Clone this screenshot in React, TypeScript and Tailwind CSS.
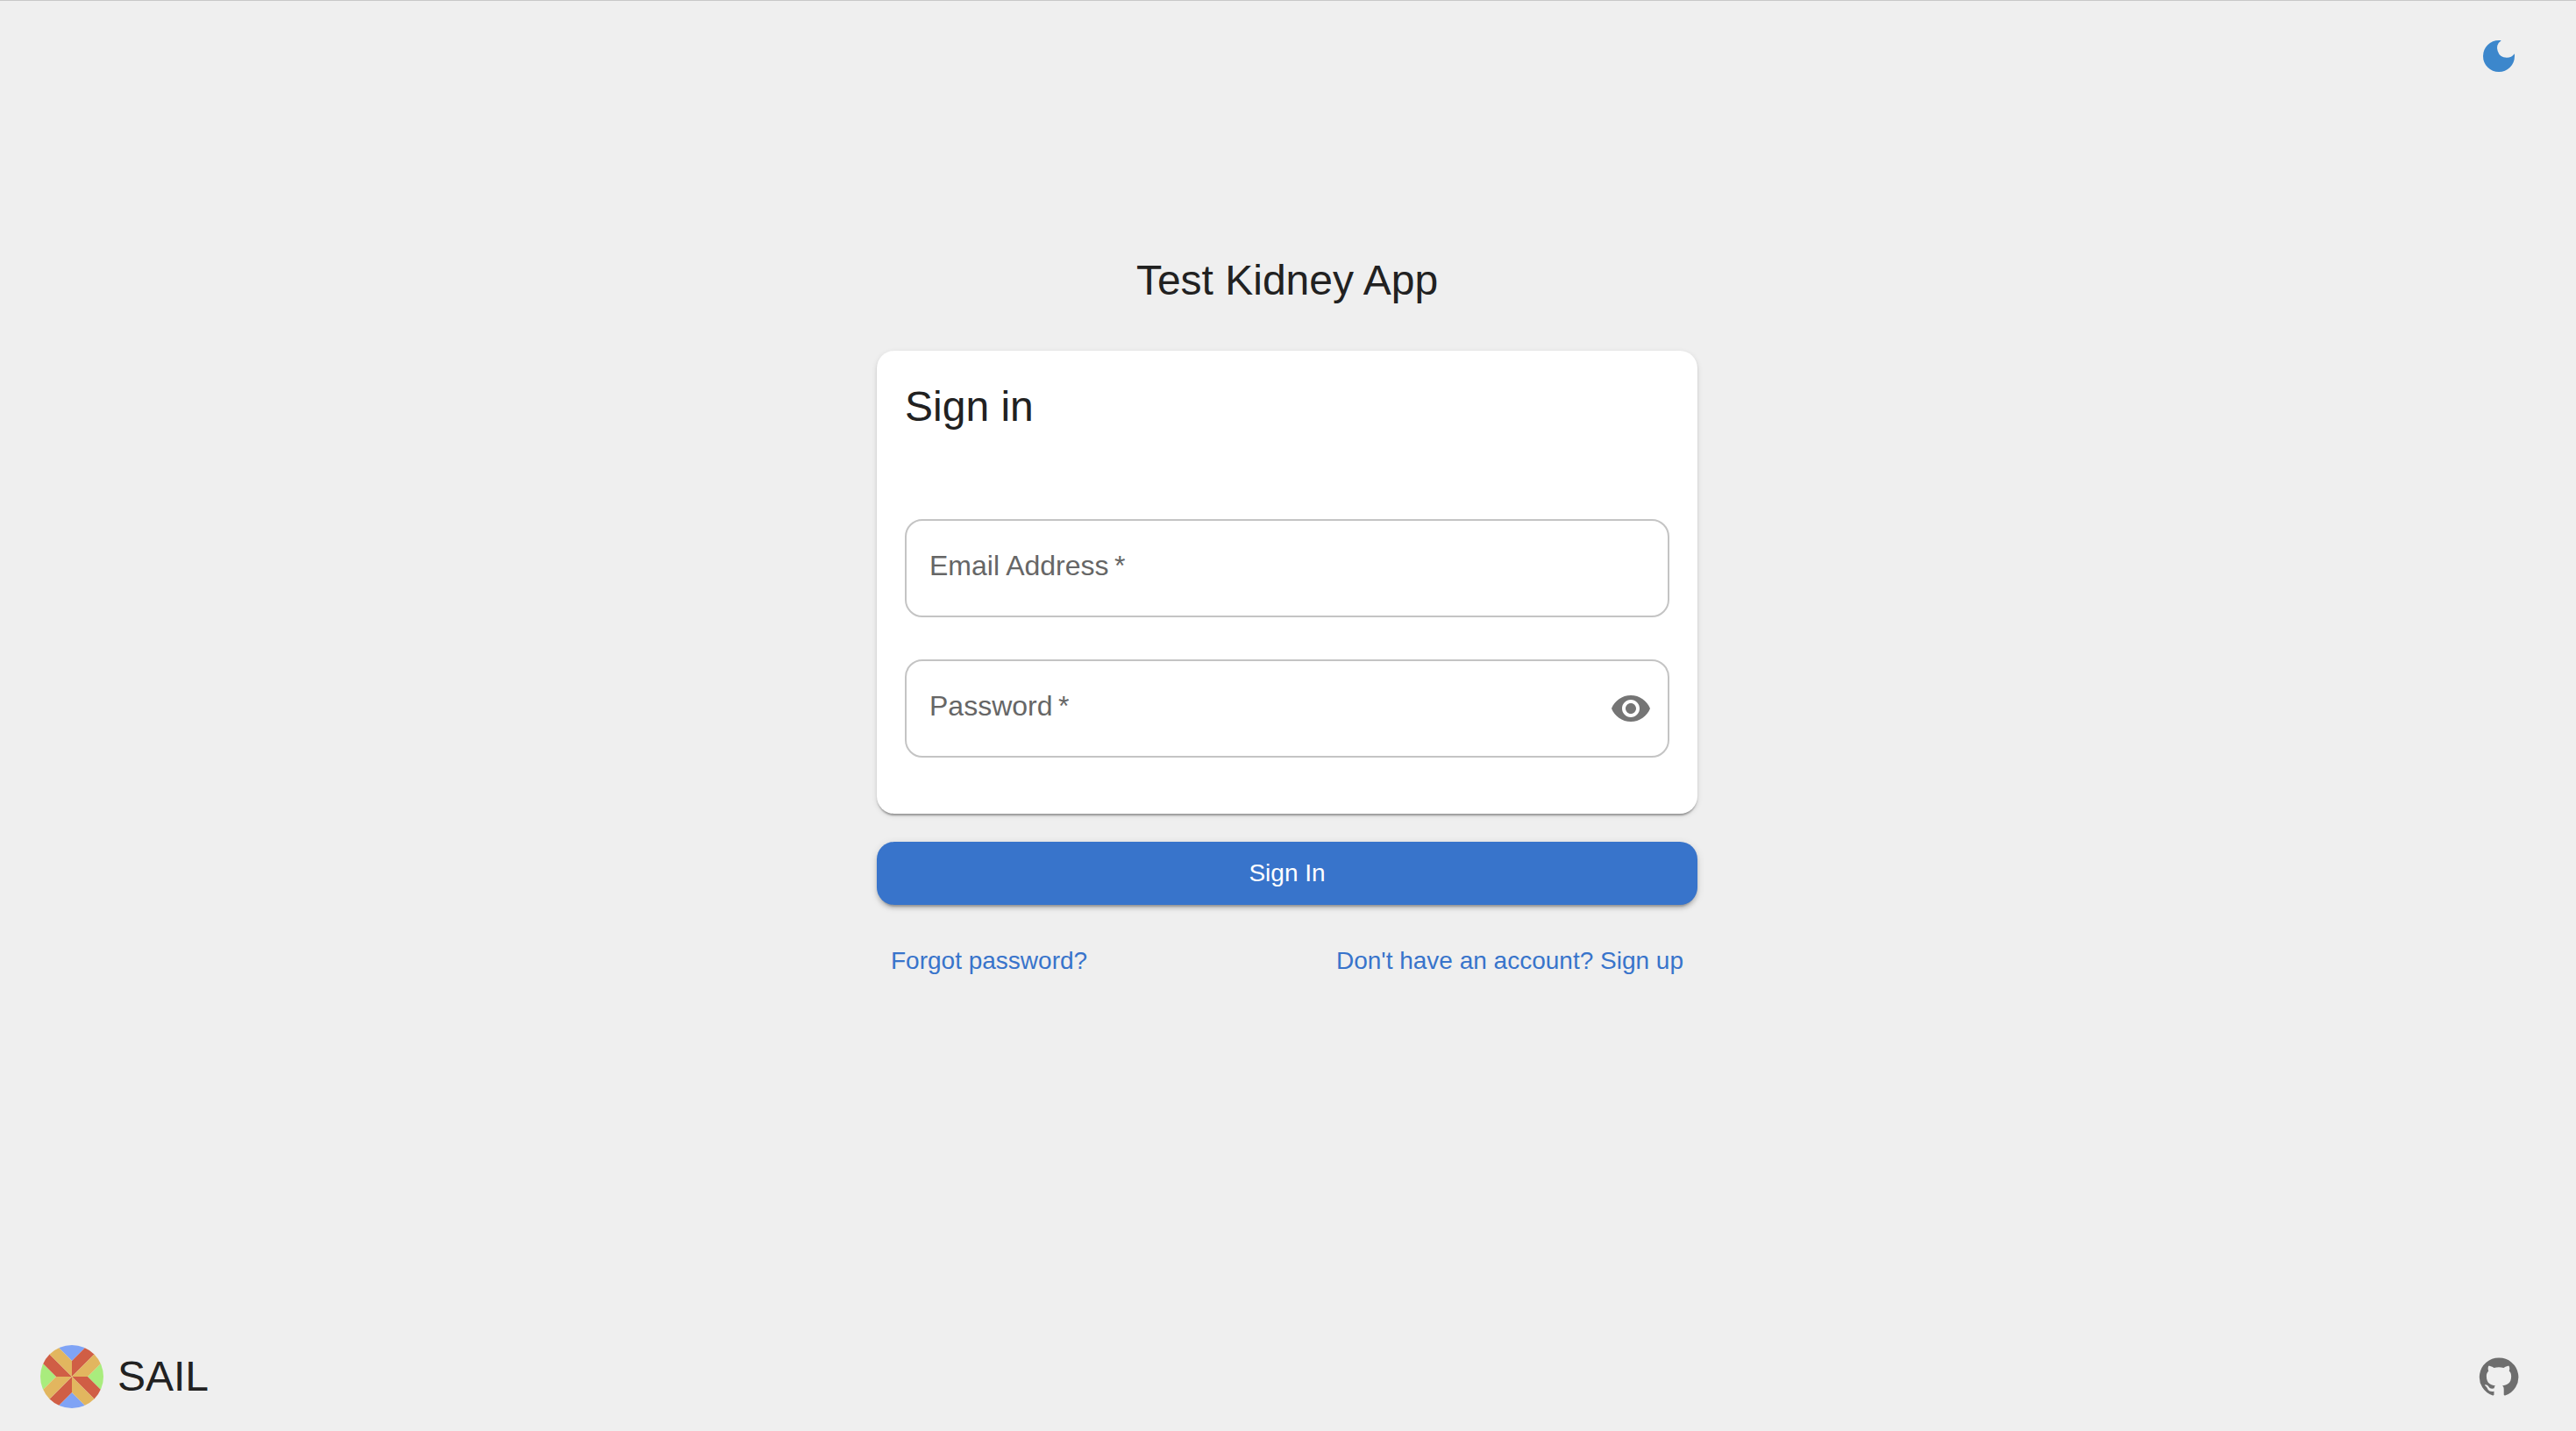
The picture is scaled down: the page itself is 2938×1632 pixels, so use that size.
import { useState } from "react";
import type { ReactNode } from "react";
import { MdDarkMode, MdVisibility, MdVisibilityOff } from "react-icons/md";

const cardShadow =
  "shadow-[0_4px_2px_-2px_rgba(0,0,0,0.2),0_2px_2px_0_rgba(0,0,0,0.14),0_2px_6px_0_rgba(0,0,0,0.12)]";
const buttonShadow =
  "shadow-[0_6px_2px_-4px_rgba(0,0,0,0.2),0_4px_4px_0_rgba(0,0,0,0.14),0_2px_10px_0_rgba(0,0,0,0.12)]";

function SailLogo() {
  return (
    <svg viewBox="-36 -36 72 72" className="size-18 rounded-full" aria-hidden="true">
      <path d="M0-18L-40-58H40Z" fill="#7fa3f5" />
      <path d="M0 18L-40 58H40Z" fill="#7fa3f5" />
      <path d="M-18 0L-58-40V40Z" fill="#a9ec7d" />
      <path d="M18 0L58-40V40Z" fill="#a9ec7d" />
      <path d="M0 0V-18L40-58V-40Z" fill="#d05e45" />
      <path d="M0 0H18L58-40H40Z" fill="#e2b65f" />
      <path d="M0 0H18L58 40H40Z" fill="#d05e45" />
      <path d="M0 0V18L40 58V40Z" fill="#e2b65f" />
      <path d="M0 0V18L-40 58V40Z" fill="#d05e45" />
      <path d="M0 0H-18L-58 40H-40Z" fill="#e2b65f" />
      <path d="M0 0H-18L-58-40H-40Z" fill="#d05e45" />
      <path d="M0 0V-18L-40-58V-40Z" fill="#e2b65f" />
    </svg>
  );
}

function GitHubIcon() {
  return (
    <svg viewBox="0 0 24 24" className="size-12" fill="currentColor" aria-hidden="true">
      <path d="M12 1.27a11 11 0 00-3.48 21.46c.55.09.73-.28.73-.55v-1.84c-3.03.64-3.67-1.46-3.67-1.46-.55-1.29-1.28-1.65-1.28-1.65-.92-.65.1-.65.1-.65 1.1 0 1.73 1.1 1.73 1.1.92 1.65 2.57 1.2 3.21.92a2 2 0 01.64-1.47c-2.47-.27-5.04-1.19-5.04-5.5 0-1.1.46-2.1 1.2-2.84a3.76 3.76 0 010-2.93s.91-.28 3.11 1.1c1.8-.49 3.7-.49 5.5 0 2.1-1.38 3.02-1.1 3.02-1.1a3.76 3.76 0 01.1 2.93c.83.74 1.2 1.74 1.2 2.94 0 4.21-2.57 5.13-5.04 5.4.45.37.82.92.82 2.02v3.03c0 .27.1.64.73.55A11 11 0 0012 1.27" />
    </svg>
  );
}

type FieldProps = {
  id: string;
  label: string;
  type: string;
  autoComplete: string;
  children?: ReactNode;
};

function Field({ id, label, type, autoComplete, children }: FieldProps) {
  return (
    <div className="relative flex h-28 items-center rounded-[20px] border-2 border-[#c4c4c4] focus-within:border-[#3874cb]">
      <input
        id={id}
        type={type}
        required
        placeholder=" "
        autoComplete={autoComplete}
        className="peer h-full min-w-0 flex-1 bg-transparent px-[26px] text-[32px] outline-none"
      />
      <label
        htmlFor={id}
        className="pointer-events-none absolute inset-y-0 left-[26px] flex items-center pb-1.5 text-[32px] leading-[46px] text-[#666666] peer-[:not(:placeholder-shown)]:hidden"
      >
        {label}&thinsp;*
      </label>
      {children}
    </div>
  );
}

export default function App() {
  const [visible, setVisible] = useState(false);

  return (
    <div className="flex min-h-screen flex-col border-t border-[#c8c8c8] bg-[#efefef] font-['Liberation_Sans',Arial,sans-serif] text-[#212121]">
      <header className="flex justify-end px-12 pt-[23px]">
        <button
          type="button"
          aria-label="Switch to dark mode"
          className="rounded-full p-4 text-[#3c87cc]"
        >
          <MdDarkMode className="size-12" />
        </button>
      </header>

      <main className="mx-auto flex w-full max-w-[938px] flex-1 flex-col pt-46 pr-0.5">
        <h1 className="text-center text-5xl leading-16">Test Kidney App</h1>

        <form className="mt-12 flex flex-col" onSubmit={(e) => e.preventDefault()}>
          <section className={`rounded-[20px] bg-white px-8 pt-8 pb-16 ${cardShadow}`}>
            <h2 className="text-5xl leading-16">Sign in</h2>
            <div className="mt-24 flex flex-col gap-12">
              <Field id="email" label="Email Address" type="email" autoComplete="email" />
              <Field
                id="password"
                label="Password"
                type={visible ? "text" : "password"}
                autoComplete="current-password"
              >
                <button
                  type="button"
                  aria-label="Toggle password visibility"
                  onClick={() => setVisible(!visible)}
                  className="mr-0.5 rounded-full p-4 text-[#757575]"
                >
                  {visible ? (
                    <MdVisibilityOff className="size-12" />
                  ) : (
                    <MdVisibility className="size-12" />
                  )}
                </button>
              </Field>
            </div>
          </section>

          <button
            type="submit"
            className={`mt-8 h-18 rounded-[20px] bg-[#3874cb] text-[28px] leading-10 text-white ${buttonShadow}`}
          >
            Sign In
          </button>
        </form>

        <nav className="mt-11 flex justify-between px-4 text-[28px] leading-10 text-[#3874cb]">
          <a href="#forgot-password">Forgot password?</a>
          <a href="#sign-up">Don't have an account? Sign up</a>
        </nav>
      </main>

      <footer className="flex items-center justify-between pr-12 pb-[22px] pl-[46px]">
        <a href="#home" className="flex items-center gap-4">
          <SailLogo />
          <span className="text-5xl leading-16">SAIL</span>
        </a>
        <a href="#github" aria-label="GitHub" className="rounded-full p-4 text-[#6e6e6e]">
          <GitHubIcon />
        </a>
      </footer>
    </div>
  );
}
